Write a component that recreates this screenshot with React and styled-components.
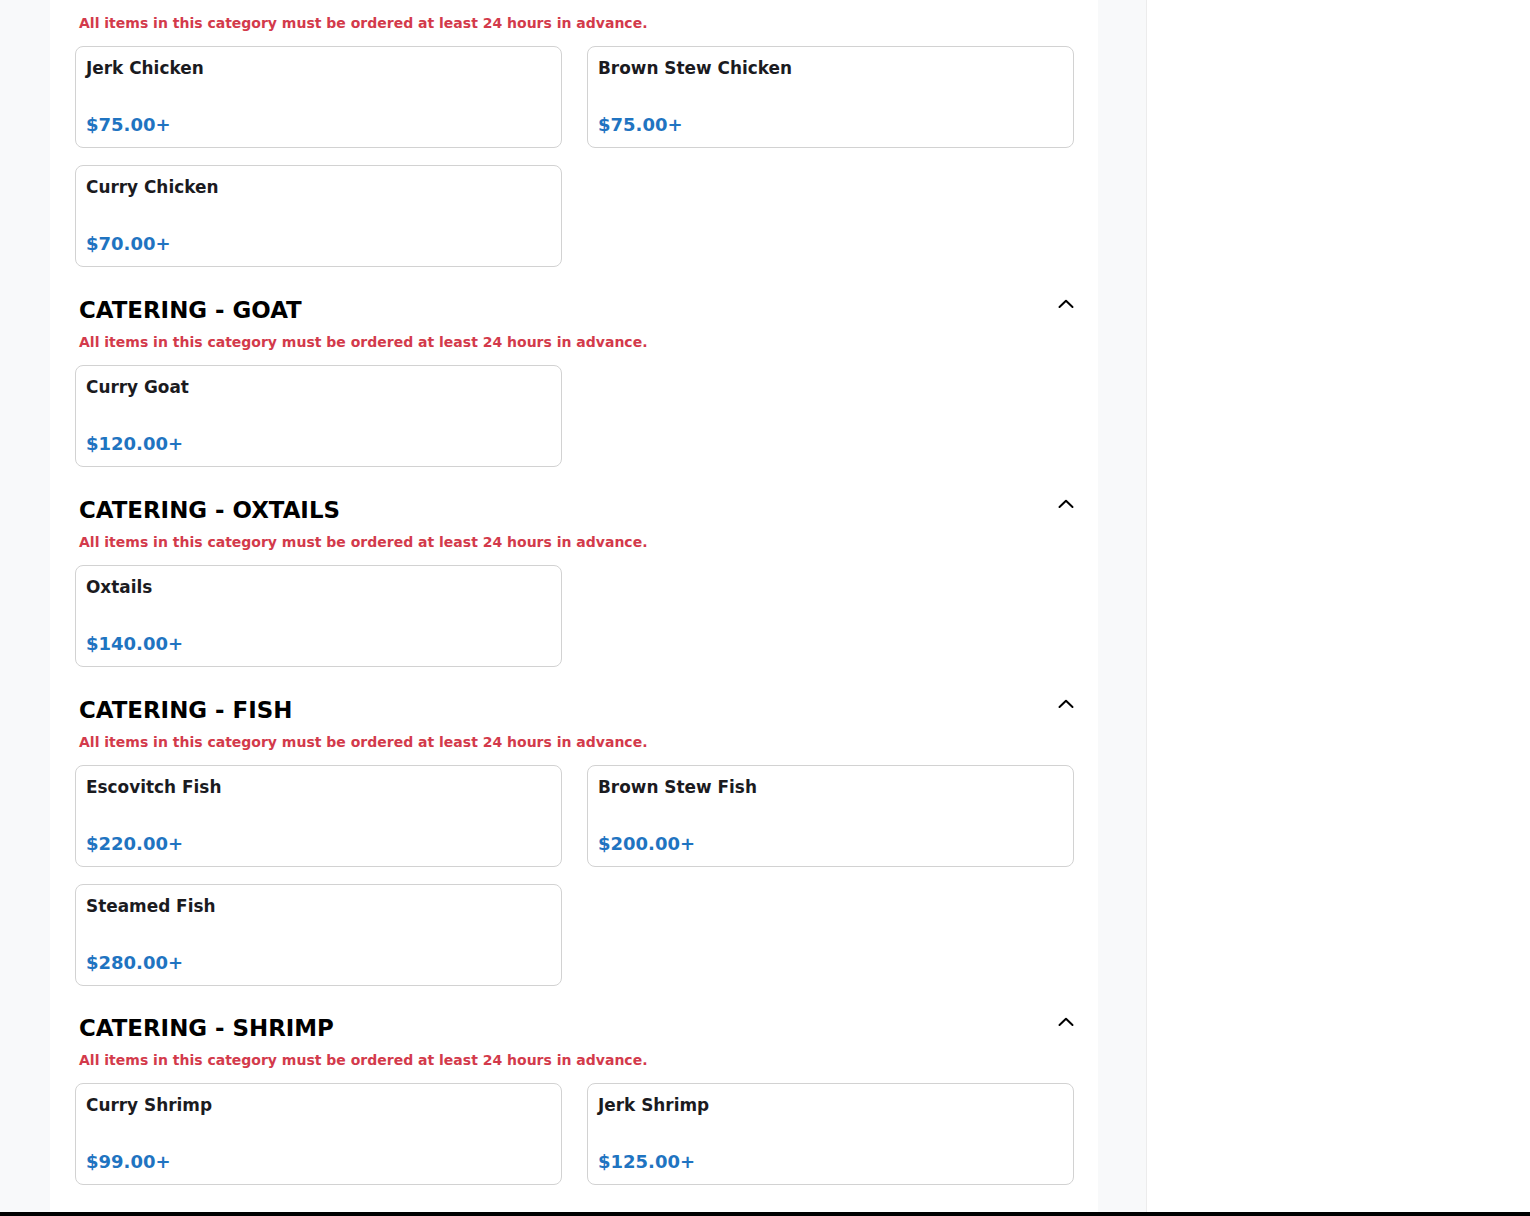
import React from 'react'
import styled, { createGlobalStyle } from 'styled-components';

const GlobalStyle = createGlobalStyle`
  html, body {
    margin: 0;
    padding: 0;
    background: #f8f9fa;
    font-family: "DejaVu Sans", Verdana, sans-serif;
  }
  * { box-sizing: border-box; }
`;

const Page = styled.div`
  display: flex;
  padding-left: 50px;
  height: 1212px;
  overflow: hidden;
`;

const Main = styled.main`
  width: 1048px;
  background: #fff;
  padding: 13px 24px 0 25px;
`;

const Sidebar = styled.aside`
  flex: 1;
  margin-left: 48px;
  background: #fff;
  border-left: 1px solid #ececec;
`;

const Footer = styled.footer`
  height: 4px;
  background: #000;
`;

const Section = styled.section`
  margin-bottom: 29.85px;
`;

const HeadRow = styled.div`
  display: flex;
  justify-content: space-between;
  align-items: flex-start;
  padding: 0 0 0 4px;
  margin-bottom: 8px;
`;

const Title = styled.h2`
  margin: 0;
  font-size: 22.9px;
  line-height: 27px;
  font-weight: 700;
  color: #000;
`;

const Toggle = styled.button`
  border: 0;
  background: none;
  padding: 0;
  margin: 0;
  width: 16px;
  height: 14px;
  display: flex;
  align-items: center;
  justify-content: center;
  color: #000;
  cursor: pointer;
`;

const Note = styled.p`
  margin: 0 0 12px;
  padding: 0 4px;
  font-size: 14px;
  line-height: 21px;
  font-weight: 700;
  color: #d33a4b;
`;

const Grid = styled.div`
  display: grid;
  grid-template-columns: 1fr 1fr;
  column-gap: 25px;
  row-gap: 17px;
`;

const Card = styled.div`
  height: 102px;
  border: 1px solid #d2d2d2;
  border-radius: 8px;
  background: #fff;
  padding: 10px;
  display: flex;
  flex-direction: column;
  justify-content: space-between;
`;

const Name = styled.div`
  font-size: 16.9px;
  line-height: 22px;
  font-weight: 700;
  color: #1b1b1f;
`;

const Price = styled.div`
  font-size: 18px;
  line-height: 24px;
  font-weight: 700;
  color: #1f74c1;
`;

const NOTE = 'All items in this category must be ordered at least 24 hours in advance.';

const sections = [
  { title: null, items: [['Jerk Chicken', '$75.00+'], ['Brown Stew Chicken', '$75.00+'], ['Curry Chicken', '$70.00+']] },
  { title: 'CATERING - GOAT', items: [['Curry Goat', '$120.00+']] },
  { title: 'CATERING - OXTAILS', items: [['Oxtails', '$140.00+']] },
  { title: 'CATERING - FISH', items: [['Escovitch Fish', '$220.00+'], ['Brown Stew Fish', '$200.00+'], ['Steamed Fish', '$280.00+']] },
  { title: 'CATERING - SHRIMP', items: [['Curry Shrimp', '$99.00+'], ['Jerk Shrimp', '$125.00+']] },
];

const Chevron = () => (
  <svg width="16" height="10" viewBox="0 0 16 10" fill="none">
    <polyline points="1.5,8 8,1.8 14.5,8" stroke="currentColor" strokeWidth="2" strokeLinecap="round" strokeLinejoin="round" />
  </svg>
);

export default function App() {
  return (
    <>
      <GlobalStyle />
      <Page>
        <Main>
          {sections.map((s, i) => (
            <Section key={i}>
              {s.title && (
                <HeadRow>
                  <Title>{s.title}</Title>
                  <Toggle aria-label="collapse"><Chevron /></Toggle>
                </HeadRow>
              )}
              <Note>{NOTE}</Note>
              <Grid>
                {s.items.map(([name, price]) => (
                  <Card key={name}>
                    <Name>{name}</Name>
                    <Price>{price}</Price>
                  </Card>
                ))}
              </Grid>
            </Section>
          ))}
        </Main>
        <Sidebar />
      </Page>
      <Footer />
    </>
  );
}
